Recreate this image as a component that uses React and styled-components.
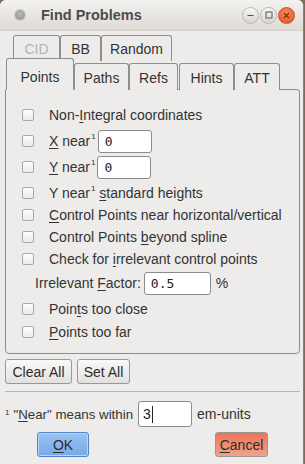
import React from 'react';
import styled, { createGlobalStyle } from 'styled-components';

const Global = createGlobalStyle`
    html, body { margin: 0; padding: 0; background: #7b6d60; }
    body { font-family: "Liberation Sans", Arial, sans-serif; font-size: 14px; color: #333; }
`;

const Window = styled.div`
    width: 303px;
    height: 464px;
    background: #edeceb;
    border-right: 1px solid #8d7f72;
    border-radius: 6px 6px 0 0;
    overflow: hidden;
    display: flex;
    flex-direction: column;
`;

const TitleBar = styled.div`
    height: 31px;
    flex: none;
    display: flex;
    align-items: center;
    padding: 0 8px 0 15px;
    background: linear-gradient(#f3f2f0, #dedad5);
    border-bottom: 1px solid #d2cec9;
    box-sizing: border-box;
`;

const Dot = styled.div`
    width: 10px;
    height: 10px;
    border-radius: 50%;
    background: radial-gradient(circle at 50% 40%, #b9b9b9, #8e8e8e);
    box-shadow: 0 0 0 1px #cfcfcf;
`;

const Title = styled.div`
    margin-left: 16px;
    font-weight: bold;
    font-size: 14.5px;
    color: #4c4c4c;
    flex: 1;
`;

const WinBtn = styled.div`
    width: 17px;
    height: 17px;
    border-radius: 50%;
    margin-left: 1px;
    box-sizing: border-box;
    display: flex;
    align-items: center;
    justify-content: center;
    background: ${p => p.$close ? 'radial-gradient(circle at 50% 35%, #f68a5d, #e2521f)' : 'linear-gradient(#f7f6f4, #d9d6d2)'};
    border: 1px solid ${p => p.$close ? '#c5542b' : '#b9b5b0'};
`;

const Body = styled.div`
    flex: 1;
    display: flex;
    flex-direction: column;
    padding: 4px 0 0 5px;
`;

const TabRow = styled.div`
    display: flex;
    padding-left: ${p => p.$pad}px;
    height: ${p => p.$h}px;
    margin-top: ${p => p.$mt || 0}px;
    align-items: flex-end;
    position: relative;
    z-index: ${p => p.$z};
`;

const Tab = styled.div`
    box-sizing: border-box;
    width: ${p => p.$w}px;
    height: ${p => p.$h}px;
    margin-right: ${p => p.$gap || 0}px;
    border: 1px solid #8e8e8e;
    border-bottom: ${p => p.$active ? '1px solid #edeceb' : 'none'};
    border-radius: 3px 3px 0 0;
    background: #edeceb;
    display: flex;
    align-items: center;
    justify-content: center;
    padding-top: ${p => p.$pt || 0}px;
    color: ${p => p.$dim ? '#b3b3b3' : '#333'};
    font-size: 14px;
`;

const Panel = styled.div`
    box-sizing: border-box;
    width: 295px;
    height: 265px;
    margin-top: -1px;
    border: 1px solid #8e8e8e;
    border-radius: 0 3px 4px 4px;
    padding: 14px 0 0 16px;
    display: flex;
    flex-direction: column;
`;

const Row = styled.div`
    display: flex;
    align-items: center;
    height: ${p => p.$h || 22}px;
    margin-top: ${p => p.$mt || 0}px;
    padding-left: ${p => p.$indent || 0}px;
    white-space: nowrap;
`;

const Check = styled.span`
    width: 12px;
    height: 12px;
    box-sizing: border-box;
    border: 1px solid #a9a9a9;
    border-radius: 2px;
    background: linear-gradient(#fdfdfd, #ecebea);
    margin-right: 15px;
    flex: none;
`;

const U = styled.span`
    text-decoration: underline;
    text-underline-offset: 2px;
`;

const Sup = styled.sup`
    font-size: 8px;
    vertical-align: top;
    position: relative;
    top: -1px;
    margin-left: 1px;
`;

const Field = styled.div`
    box-sizing: border-box;
    width: ${p => p.$w}px;
    height: ${p => p.$h || 23}px;
    margin-left: ${p => p.$ml ?? 3}px;
    background: #fff;
    border: 1px solid #8b8b8b;
    border-radius: 3px;
    display: flex;
    align-items: center;
    padding-left: ${p => p.$pl || 6}px;
    font-family: ${p => p.$mono ? '"DejaVu Sans Mono", monospace' : '"Liberation Sans", Arial, sans-serif'};
    font-size: ${p => p.$mono ? 13 : 14}px;
    color: #222;
`;

const Caret = styled.span`
    display: inline-block;
    width: 1px;
    height: 17px;
    background: #222;
    margin-left: 1px;
`;

const BtnRow = styled.div`
    display: flex;
    gap: 5px;
    margin-top: 5px;
`;

const Button = styled.div`
    box-sizing: border-box;
    width: ${p => p.$w}px;
    height: 25px;
    display: flex;
    align-items: center;
    justify-content: center;
    border-radius: 3px;
    font-size: 14px;
    border: 1px solid ${p => p.$kind === 'ok' ? '#4f86cc' : '#9a9896'};
    color: #2d2d2d;
    background: ${p => p.$kind === 'ok'
        ? 'linear-gradient(#9cc4f2, #78a8e6)'
        : p.$kind === 'cancel'
            ? 'linear-gradient(#ef7458, #f0a28c)'
            : 'linear-gradient(#f9f9f8, #e3e1df)'};
    box-shadow: ${p => p.$kind === 'ok' ? 'inset 0 0 0 1px #b9d6f7' : 'none'};
`;

const Separator = styled.div`
    height: 1px;
    width: 295px;
    background: #b7b5b3;
    margin-top: 7px;
`;

const Footnote = styled.div`
    display: flex;
    align-items: center;
    height: 26px;
    margin-top: 9px;
    white-space: nowrap;
`;

const FootText = styled.span`
    font-size: 13.3px;
`;

const Small = styled.span`
    font-size: 8px;
    margin-right: 4px;
    align-self: center;
    margin-top: -4px;
`;

const Actions = styled.div`
    display: flex;
    justify-content: space-between;
    padding: 5px 32px 0 32px;
    width: 231px;
`;

function Item({ children, mt }) {
    return (
        <Row $mt={mt}>
            <Check />
            <span>{children}</span>
        </Row>
    );
}

export default function App() {
    return (
        <>
            <Global />
            <Window>
                <TitleBar>
                    <Dot />
                    <Title>Find Problems</Title>
                    <WinBtn>
                        <svg width="7" height="7" viewBox="0 0 7 7"><path d="M0.5 3.5h6" stroke="#555" strokeWidth="1" /></svg>
                    </WinBtn>
                    <WinBtn>
                        <svg width="8" height="8" viewBox="0 0 8 8"><rect x="1" y="1" width="6" height="6" fill="none" stroke="#555" strokeWidth="1" /></svg>
                    </WinBtn>
                    <WinBtn $close>
                        <svg width="7" height="7" viewBox="0 0 7 7"><path d="M1 1l5 5M6 1l-5 5" stroke="#7a2a10" strokeWidth="1.1" /></svg>
                    </WinBtn>
                </TitleBar>
                <Body>
                    <TabRow $pad={8} $h={26} $z={1}>
                        <Tab $w={47} $h={26} $dim>CID</Tab>
                        <Tab $w={41} $h={26}>BB</Tab>
                        <Tab $w={71} $h={26}>Random</Tab>
                    </TabRow>
                    <TabRow $pad={1} $h={31} $z={2} $mt={-2}>
                        <Tab $w={68} $h={32} $active $pt={5}>Points</Tab>
                        <Tab $w={55} $h={27} $pt={1}>Paths</Tab>
                        <Tab $w={49} $h={27} $pt={1} $gap={1}>Refs</Tab>
                        <Tab $w={55} $h={27} $pt={1}>Hints</Tab>
                        <Tab $w={46} $h={27} $pt={1}>ATT</Tab>
                    </TabRow>
                    <Panel>
                        <Item>Non-<U>I</U>ntegral coordinates</Item>
                        <Row $h={24} $mt={3}>
                            <Check />
                            <span><U>X</U> near<Sup>1</Sup></span>
                            <Field $w={54} $ml={2} $mono>0</Field>
                        </Row>
                        <Row $h={24} $mt={2}>
                            <Check />
                            <span><U>Y</U> near<Sup>1</Sup></span>
                            <Field $w={54} $ml={2} $mono>0</Field>
                        </Row>
                        <Row $mt={3}>
                            <Check />
                            <span>Y near<Sup>1</Sup> <U>s</U>tandard heights</span>
                        </Row>
                        <Item><U>C</U>ontrol Points near horizontal/vertical</Item>
                        <Item>Control Points <U>b</U>eyond spline</Item>
                        <Item>Check for <U>i</U>rrelevant control points</Item>
                        <Row $h={24} $mt={1} $indent={13}>
                            <span>Irrelevant <U>F</U>actor:</span>
                            <Field $w={67} $ml={3} $mono>0.5</Field>
                            <span style={{ marginLeft: 5 }}>%</span>
                        </Row>
                        <Item mt={3}>Poin<U>t</U>s too close</Item>
                        <Item mt={1}><U>P</U>oints too far</Item>
                    </Panel>
                    <BtnRow>
                        <Button $w={67}>Clear All</Button>
                        <Button $w={53}>Set All</Button>
                    </BtnRow>
                    <Separator />
                    <Footnote>
                        <Small>1</Small>
                        <FootText>"<U>N</U>ear" means within</FootText>
                        <Field $w={54} $h={26} $ml={5} $pl={4}>3<Caret /></Field>
                        <span style={{ marginLeft: 5 }}>em-units</span>
                    </Footnote>
                    <Actions>
                        <Button $w={52} $kind="ok"><U>O</U>K</Button>
                        <Button $w={53} $kind="cancel"><U>C</U>ancel</Button>
                    </Actions>
                </Body>
            </Window>
        </>
    );
}
